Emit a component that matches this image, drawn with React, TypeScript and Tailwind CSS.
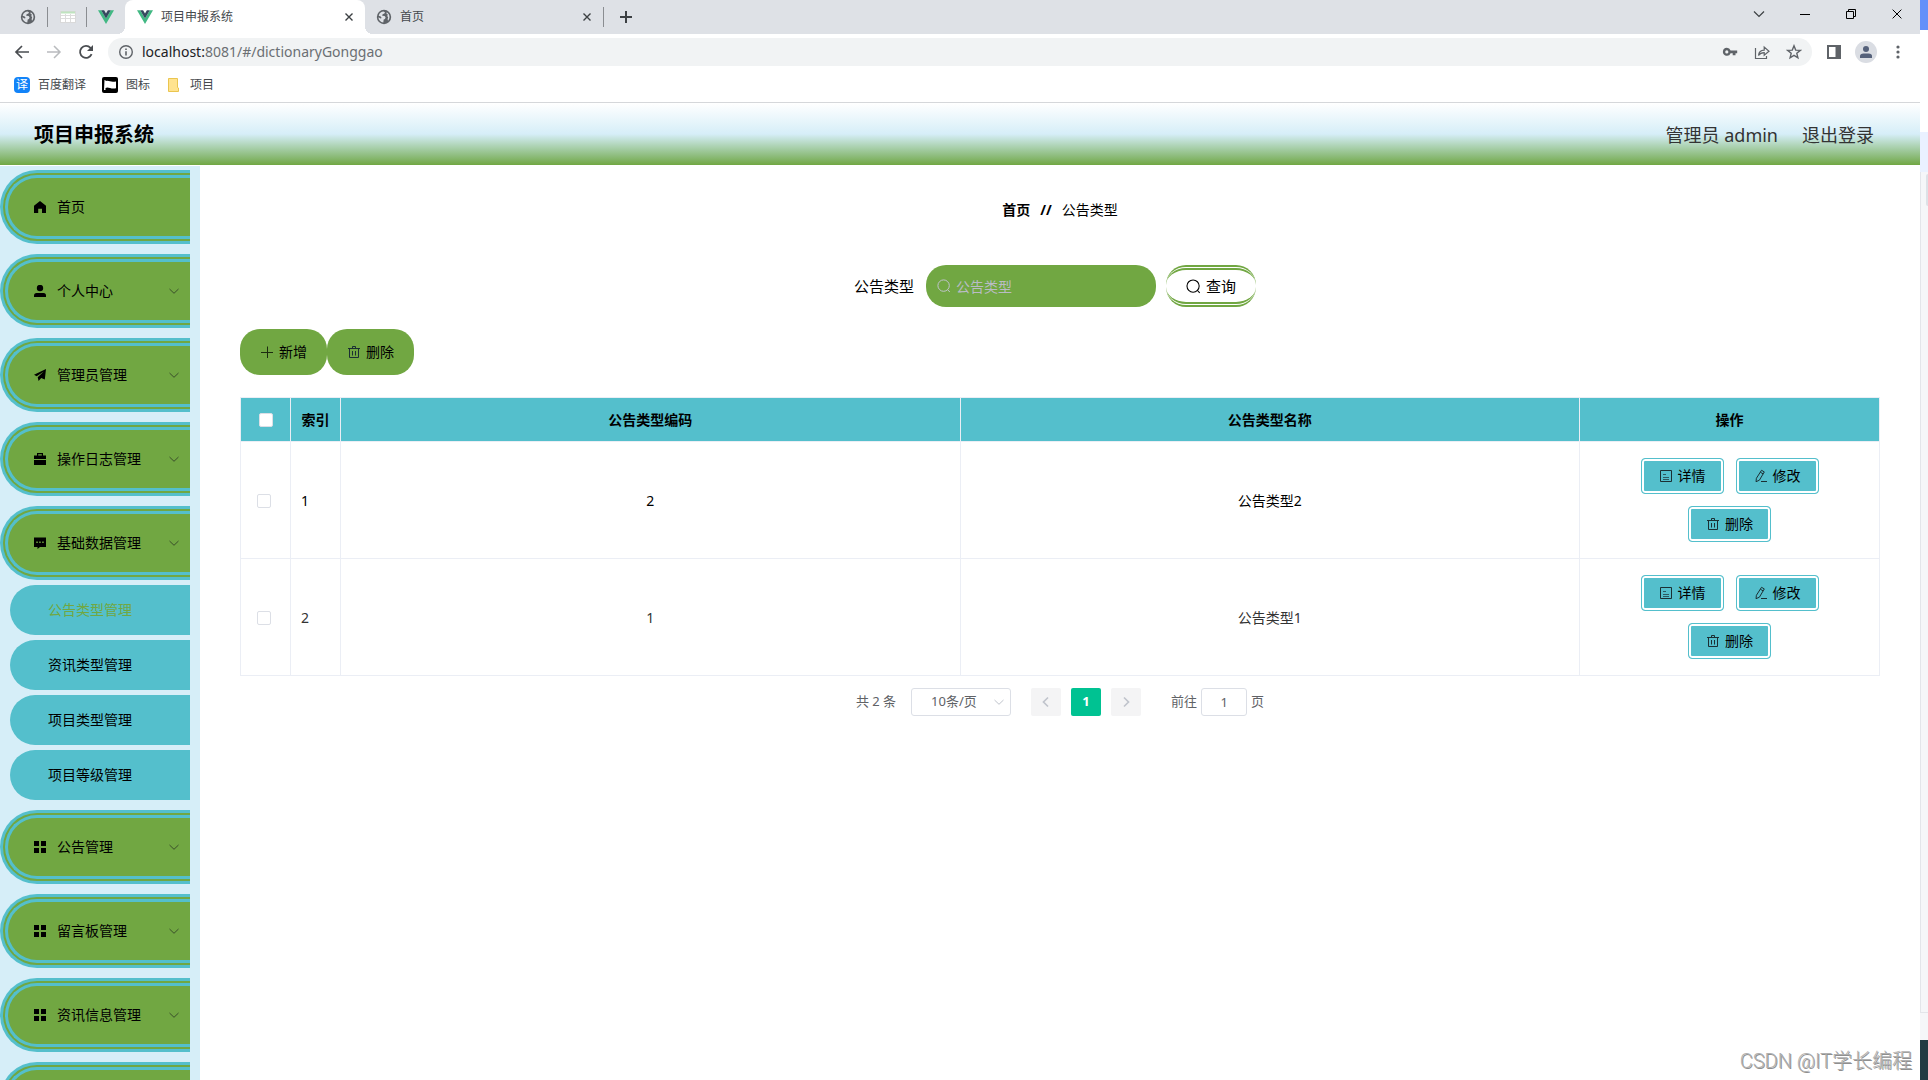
import type { ReactNode } from "react";

type IconProps = { className?: string };

const Svg = ({
  box = 16,
  className = "size-4",
  fill = false,
  w = 1,
  children,
}: {
  box?: number;
  className?: string;
  fill?: boolean;
  w?: number;
  children: ReactNode;
}) => (
  <svg
    viewBox={`0 0 ${box} ${box}`}
    className={`shrink-0 ${className}`}
    fill={fill ? "currentColor" : "none"}
    stroke={fill ? "none" : "currentColor"}
    strokeWidth={w}
    aria-hidden="true"
  >
    {children}
  </svg>
);

/* ---------- browser icons ---------- */

const Globe = () => (
  <Svg className="size-4 text-[#5f6368]" fill>
    <circle cx="8" cy="8" r="7.2" />
    <path
      fill="#dee1e6"
      d="M3.4 4.8C4.3 3.4 5.6 2.6 7.4 2.4L9 3.2 8.4 4.400 6.600 5.300 6.200 6.800 8.600 7 9.600 8.300 9 10 7.700 10.500 7.300 13.500C4.500 13.200 2.500 11 2.400 8.200L4.600 9.400 5.600 9 4.800 7.600 2.700 6.800ZM10.800 3.200C12.500 4.200 13.500 5.900 13.500 8 13.500 9.500 12.900 10.800 12 11.800L11.600 10 12.200 8.600 11.300 7 11.800 5.600 10.400 4.600Z"
    />
  </Svg>
);

const VueLogo = () => (
  <Svg className="size-4" fill>
    <path fill="#41b883" d="M0 1.200H3.200L8 9.500 12.800 1.200H16L8 15Z" />
    <path fill="#35495e" d="M3.200 1.200H6.100L8 4.500 9.900 1.200H12.800L8 9.500Z" />
  </Svg>
);

const SheetIcon = () => (
  <Svg className="size-4">
    <rect x="0.5" y="2.5" width="15" height="11" fill="#fff" stroke="#d9d9d9" />
    <path stroke="#bfe3bf" d="M1 3.500H15" strokeWidth="2" />
    <path stroke="#dcdcdc" d="M1 6.500H15M1 9.500H15M5.500 5V13M10.500 5V13" />
  </Svg>
);

const Cross = ({ className = "size-2", w = 1.4 }: { className?: string; w?: number }) => (
  <Svg box={8} className={className} w={w}>
    <path d="M0.500 0.500 7.500 7.500M7.500 0.500 0.500 7.500" />
  </Svg>
);

const BackIcon = () => (
  <Svg w={1.7}>
    <path d="M15 8H2.500M8 2 2 8 8 14" />
  </Svg>
);

const ForwardIcon = () => (
  <Svg w={1.5}>
    <path d="M1 8H13.500M8 2 14 8 8 14" />
  </Svg>
);

const ReloadIcon = () => (
  <Svg w={1.8}>
    <path d="M13.600 10.200A6 6 0 1 1 12.500 3.900L14 5.400" />
    <path d="M15 1V7H9Z" fill="currentColor" stroke="none" />
  </Svg>
);

const InfoIcon = () => (
  <Svg className="size-4 text-[#5f6368]" w={1.4}>
    <circle cx="8" cy="8" r="6.300" />
    <path d="M8 7.200V11.500M8 4.500V6" strokeWidth="1.600" />
  </Svg>
);

const KeyIcon = () => (
  <Svg fill>
    <path
      fillRule="evenodd"
      d="M4.800 3.800A4 4 0 1 0 8.600 9.300H10.700V11.300H13.500V9.300H15.200V6.400H8.600A4 4 0 0 0 4.800 3.800ZM4.800 6.300A1.600 1.600 0 1 1 4.800 9.500 1.600 1.600 0 0 1 4.800 6.300Z"
    />
  </Svg>
);

const ShareIcon = () => (
  <Svg w={1.2}>
    <path d="M1.500 4V14.500H12.500V12" />
    <path d="M4.500 11.500C4.900 8 7 6.300 10.200 6.200V3L15 7.300 10.200 11.300V8.600C7.800 8.600 5.900 9.400 4.500 11.500Z" />
  </Svg>
);

const StarIcon = () => (
  <Svg w={1.4}>
    <path d="M8 1.800 9.700 6.100 14.300 6.400 10.800 9.300 11.900 13.800 8 11.300 4.100 13.800 5.200 9.300 1.700 6.400 6.300 6.100Z" />
  </Svg>
);

const PanelIcon = () => (
  <Svg w={2}>
    <rect x="2" y="2" width="12" height="12" />
    <path d="M11.500 2V14" strokeWidth="4" />
  </Svg>
);

/* ---------- page icons ---------- */

const HomeIcon = () => (
  <Svg box={12} className="size-3" fill>
    <path d="M6 0 12 4.800V12H8V7.800H4.200V12H0V4.800Z" />
  </Svg>
);
const UserIcon = () => (
  <Svg box={12} className="size-3" fill>
    <circle cx="6" cy="3" r="3.200" />
    <path d="M0 12V10.500Q0 8 2.500 8H9.500Q12 8 12 10.500V12Z" />
  </Svg>
);
const PlaneIcon = () => (
  <Svg box={12} className="size-3" fill>
    <path d="M12 0 10.800 10.500 7.200 8.900 4.600 12 3.700 8.200 9.800 2.400 2.700 7.300 0 5.700Z" />
  </Svg>
);
const CaseIcon = () => (
  <Svg box={12} className="size-3" fill>
    <path d="M3 2.500V0H9V2.500H12V6H0V2.500ZM4.200 2.500H7.800V1.200H4.200ZM0 7H12V12H0Z" fillRule="evenodd" />
  </Svg>
);
const ChatIcon = () => (
  <Svg box={12} className="size-3" fill>
    <path
      fillRule="evenodd"
      d="M0 0.500H12V10H6L3.500 12V10H0ZM2.300 4.500V6H3.800V4.500ZM5.200 4.500V6H6.700V4.500ZM8.200 4.500V6H9.700V4.500Z"
    />
  </Svg>
);
const GridIcon = () => (
  <Svg box={12} className="size-3" fill>
    <path d="M0 0H5V5H0ZM7 0H12V5H7ZM0 7H5V12H0ZM7 7H12V12H7Z" />
  </Svg>
);

const ChevronDown = ({ className = "size-3" }: IconProps) => (
  <Svg box={12} className={className} w={1}>
    <path d="M1.500 4 6 8.300 10.500 4" />
  </Svg>
);
const SearchIcon = ({ className = "size-3.5" }: IconProps) => (
  <Svg box={14} className={className} w={1}>
    <circle cx="6.600" cy="6.600" r="5.700" />
    <path d="M10.500 10.500 12.800 13" />
  </Svg>
);
const PlusIcon = () => (
  <Svg box={14} className="size-3.5 text-[#1c2b10]">
    <path d="M1 7.500H13M7.500 1.500V13" />
  </Svg>
);
const TrashIcon = () => (
  <Svg box={14} className="size-3.5 text-[#1b2f33]">
    <path d="M1 3.500H13M2.500 3.500V12.500H11.500V3.500M5.500 3V1.500H8.500V3M5.500 6V10.500M8.500 6V10.500" />
  </Svg>
);
const DocIcon = () => (
  <Svg box={14} className="size-3.5 text-[#1b2f33]">
    <path d="M1.500 1.500H12.500V12.500H1.500Z" />
    <path d="M4 5.500H7M4 8.500H10M4 10.500H10" opacity="0.7" />
  </Svg>
);
const EditIcon = () => (
  <Svg box={14} className="size-3.5 text-[#1b2f33]">
    <path d="M7.500 1.300 10.300 2.900 5.400 11.200 2 12.700 2.400 9.300ZM6.300 3.200 9.200 4.900M7 12.500H13" />
  </Svg>
);

/* ---------- data ---------- */

type Group = { label: string; icon?: () => ReactNode; leaf?: boolean; children?: string[] };

const menu: Group[] = [
  { label: "首页", icon: HomeIcon, leaf: true },
  { label: "个人中心", icon: UserIcon },
  { label: "管理员管理", icon: PlaneIcon },
  { label: "操作日志管理", icon: CaseIcon },
  {
    label: "基础数据管理",
    icon: ChatIcon,
    children: ["公告类型管理", "资讯类型管理", "项目类型管理", "项目等级管理"],
  },
  { label: "公告管理", icon: GridIcon },
  { label: "留言板管理", icon: GridIcon },
  { label: "资讯信息管理", icon: GridIcon },
  { label: "", leaf: true },
];

const rows = [
  { index: 1, code: "2", name: "公告类型2", tone: "text-black" },
  { index: 2, code: "1", name: "公告类型1", tone: "text-[#333333]" },
];

/* ---------- browser frame ---------- */

function TabStrip() {
  return (
    <div className="flex h-[34px] items-stretch bg-[#dee1e6] text-xs text-[#45494d]">
      <div className="flex items-center pl-5">
        <Globe />
        <span className="ml-[11px] h-5 w-px bg-[#8a8d91]" />
        <span className="ml-3">
          <SheetIcon />
        </span>
        <span className="ml-[10px] h-5 w-px bg-[#8a8d91]" />
        <span className="ml-[11px]">
          <VueLogo />
        </span>
      </div>
      <div className="relative ml-[11px] flex w-60 items-center rounded-t-lg bg-white pr-2 pl-3 before:absolute before:bottom-0 before:-left-2 before:size-2 before:bg-[radial-gradient(circle_at_0_0,#dee1e6_8px,#ffffff_8px)] after:absolute after:-right-2 after:bottom-0 after:size-2 after:bg-[radial-gradient(circle_at_100%_0,#dee1e6_8px,#ffffff_8px)]">
        <VueLogo />
        <span className="ml-2 flex-1">项目申报系统</span>
        <button aria-label="关闭 项目申报系统" className="p-1 text-[#3c4043]">
          <Cross />
        </button>
      </div>
      <div className="flex w-[238px] items-center pr-2 pl-[11px]">
        <Globe />
        <span className="ml-2 flex-1">首页</span>
        <button aria-label="关闭 首页" className="p-1 text-[#3c4043]">
          <Cross />
        </button>
      </div>
      <span className="h-5 w-px self-center bg-[#8a8d91]" />
      <button aria-label="新标签页" className="ml-4 text-[#3c4043]">
        <Svg box={12} className="size-3" w={2}>
          <path d="M0 6H12M6 0V12" />
        </Svg>
      </button>
      <div className="ml-auto flex items-center pb-1.5 text-black">
        <button aria-label="搜索标签页" className="grid w-[46px] place-items-center text-[#3c4043]">
          <Svg box={12} className="size-3" w={1.2}>
            <path d="M1 3.500 6 8.500 11 3.500" />
          </Svg>
        </button>
        <button aria-label="最小化" className="grid w-[46px] place-items-center">
          <Svg box={10} className="size-2.5">
            <path d="M0 5.500H10" />
          </Svg>
        </button>
        <button aria-label="还原" className="grid w-[46px] place-items-center">
          <Svg box={10} className="size-2.5">
            <path d="M0.500 2.500H7.500V9.500H0.500ZM2.500 2V0.500H9.500V7.500H8" />
          </Svg>
        </button>
        <button aria-label="关闭" className="grid w-[46px] place-items-center">
          <Cross className="size-2.5" w={0.8} />
        </button>
      </div>
    </div>
  );
}

function Toolbar() {
  return (
    <div className="flex h-9 items-center bg-white px-[14px] text-[#5f6368]">
      <div className="flex gap-4">
        <button aria-label="后退" className="text-[#4a4d51]">
          <BackIcon />
        </button>
        <button aria-label="前进" className="text-[#b9bbbe]">
          <ForwardIcon />
        </button>
        <button aria-label="重新加载" className="text-[#4a4d51]">
          <ReloadIcon />
        </button>
      </div>
      <div className="ml-[14px] flex h-7 flex-1 items-center rounded-full bg-[#f1f3f4] px-[10px]">
        <InfoIcon />
        <span className="ml-2 flex-1 text-sm text-[#6b6f73]">
          <span className="text-[#202124]">localhost:</span>8081/#/dictionaryGonggao
        </span>
        <div className="flex gap-4">
          <button aria-label="密码">
            <KeyIcon />
          </button>
          <button aria-label="分享">
            <ShareIcon />
          </button>
          <button aria-label="收藏">
            <StarIcon />
          </button>
        </div>
      </div>
      <button aria-label="侧边栏" className="ml-[14px]">
        <PanelIcon />
      </button>
      <button
        aria-label="用户"
        className="ml-[13px] grid size-[22px] place-items-center rounded-full bg-[#dadde3] text-[#55617a]"
      >
        <Svg box={12} className="size-3" fill>
          <circle cx="6" cy="3" r="3" />
          <path d="M0 12V10Q0 7.500 3.500 7.500H8.500Q12 7.500 12 10V12Z" />
        </Svg>
      </button>
      <button aria-label="菜单" className="ml-[13px]">
        <Svg fill>
          <circle cx="8" cy="3" r="1.600" />
          <circle cx="8" cy="8" r="1.600" />
          <circle cx="8" cy="13" r="1.600" />
        </Svg>
      </button>
    </div>
  );
}

function Bookmarks() {
  return (
    <nav className="flex h-[33px] items-center gap-4 border-b border-[#d5d7da] bg-white pb-0.5 pl-[14px] text-xs text-[#45494d]">
      <a href="#fanyi" className="flex items-center gap-2">
        <span className="grid size-4 place-items-center rounded-sm bg-[#1283f8] text-xs leading-4 text-white">
          译
        </span>
        百度翻译
      </a>
      <a href="#tubiao" className="flex items-center gap-2">
        <Svg className="size-4" fill>
          <rect width="16" height="16" rx="2" fill="#000" />
          <path fill="#fff" d="M2.500 3H3.500V4Q6 3.500 8 4.300T14 4.500V11.200Q11 12 8 11T3.500 11V13H2Z" />
        </Svg>
        图标
      </a>
      <a href="#xiangmu" className="flex items-center gap-2">
        <Svg className="size-4">
          <path d="M2.500 1.500H11.500V10.500L12.500 11V14.500H2.500Z" fill="#ffe38f" stroke="#eac54f" />
        </Svg>
        项目
      </a>
    </nav>
  );
}

/* ---------- application ---------- */

function Sidebar() {
  return (
    <aside className="w-[200px] shrink-0 overflow-hidden bg-[#d6eef8] pt-1 pr-2.5 text-sm text-black">
      <ul className="flex flex-col gap-2.5">
        {menu.map((g) => (
          <li key={g.label}>
            <button className="flex h-[74px] w-full items-center rounded-l-full border-8 border-r-0 border-double border-[#54bfcc] bg-[#71a742] pr-2.5 pl-[26px] text-left">
              {g.icon && <g.icon />}
              <span className="ml-[11px] flex-1">{g.label}</span>
              {!g.leaf && <ChevronDown className="size-3 text-[#3a4f2a]" />}
            </button>
            {g.children && (
              <ul className="mt-[5px] flex flex-col gap-[5px] pl-2.5">
                {g.children.map((c, i) => (
                  <li key={c}>
                    <a
                      href={`#/${c}`}
                      className={`flex h-[50px] items-center rounded-l-full bg-[#54bfcc] pl-[38px] ${
                        i === 0 ? "text-[#71a742]" : "text-black"
                      }`}
                    >
                      {c}
                    </a>
                  </li>
                ))}
              </ul>
            )}
          </li>
        ))}
      </ul>
    </aside>
  );
}

function ActionButton({ icon, children }: { icon: ReactNode; children: ReactNode }) {
  return (
    <button className="flex h-9 items-center gap-[5px] rounded-sm border border-[#54bfcc] bg-[#54bfcc] px-[17px] text-sm text-black shadow-[inset_0_0_0_2px_#ffffff]">
      {icon}
      {children}
    </button>
  );
}

const checkbox = "block size-3.5 appearance-none rounded-xs border border-[#dcdfe6] bg-white";

function DataTable() {
  return (
    <table className="mt-[22px] w-full table-fixed border-collapse text-sm [&_td]:border [&_td]:border-[#ebeef5] [&_th]:border [&_th]:border-[#ebeef5]">
      <colgroup>
        <col className="w-[50px]" />
        <col className="w-[50px]" />
        <col />
        <col />
        <col className="w-[300px]" />
      </colgroup>
      <thead>
        <tr className="h-11 bg-[#54bfcc] text-black">
          <th className="pl-[18px]">
            <input type="checkbox" aria-label="全选" className={checkbox} />
          </th>
          <th>索引</th>
          <th>公告类型编码</th>
          <th>公告类型名称</th>
          <th>操作</th>
        </tr>
      </thead>
      <tbody>
        {rows.map((r) => (
          <tr key={r.index} className={`text-center ${r.tone}`}>
            <td className="pt-0.5 pl-4">
              <input type="checkbox" aria-label={`选择第${r.index}行`} className={checkbox} />
            </td>
            <td className="pt-0.5 pl-2.5 text-left">{r.index}</td>
            <td className="pt-0.5">{r.code}</td>
            <td className="pt-0.5">{r.name}</td>
            <td className="px-14 py-4">
              <div className="flex flex-wrap justify-center gap-3">
                <ActionButton icon={<DocIcon />}>详情</ActionButton>
                <ActionButton icon={<EditIcon />}>修改</ActionButton>
                <ActionButton icon={<TrashIcon />}>删除</ActionButton>
              </div>
            </td>
          </tr>
        ))}
      </tbody>
    </table>
  );
}

function Pagination() {
  return (
    <div className="mt-3 flex items-center justify-center text-[13px] text-[#606266]">
      <span>共 2 条</span>
      <span className="relative ml-[15px]">
        <select
          aria-label="每页条数"
          className="block h-7 w-[100px] appearance-none rounded-[3px] border border-[#dcdfe6] bg-white pl-[19px] text-[13px]"
        >
          <option>10条/页</option>
        </select>
        <ChevronDown className="pointer-events-none absolute top-2 right-1.5 size-3 text-[#c0c4cc]" />
      </span>
      <button
        aria-label="上一页"
        className="ml-5 grid h-7 w-[30px] place-items-center rounded-xs bg-[#f4f4f5] text-[#c0c4cc]"
      >
        <Svg box={12} className="size-3" w={1.7}>
          <path d="M8 1.500 3.500 6 8 10.500" />
        </Svg>
      </button>
      <button className="ml-2.5 h-7 w-[30px] rounded-xs bg-[#00c292] font-bold text-white">1</button>
      <button
        aria-label="下一页"
        className="ml-2.5 grid h-7 w-[30px] place-items-center rounded-xs bg-[#f4f4f5] text-[#c0c4cc]"
      >
        <Svg box={12} className="size-3" w={1.7}>
          <path d="M4 1.500 8.500 6 4 10.500" />
        </Svg>
      </button>
      <label className="ml-[30px] flex items-center gap-1">
        前往
        <input
          defaultValue="1"
          className="h-7 w-[46px] rounded-[3px] border border-[#dcdfe6] text-center"
        />
        页
      </label>
    </div>
  );
}

function Content() {
  return (
    <main className="min-w-0 flex-1 px-10 pt-[34px]">
      <nav className="flex h-5 items-center justify-center gap-2.5 text-sm text-black">
        <a href="#/" className="font-bold">
          首页
        </a>
        <span className="font-bold">//</span>
        <span>公告类型</span>
      </nav>

      <form
        className="mt-[45px] flex items-center justify-center pr-2.5 text-[15px] text-black"
        onSubmit={(e) => e.preventDefault()}
      >
        <label htmlFor="type">公告类型</label>
        <span className="relative ml-3">
          <SearchIcon className="pointer-events-none absolute top-3.5 left-[11px] size-3.5 text-[#c0c4cc]" />
          <input
            id="type"
            placeholder="公告类型"
            className="block h-[42px] w-[230px] rounded-[20px] bg-[#71a742] pl-[30px] text-sm placeholder:text-[#b9bcc4]"
          />
        </span>
        <button className="ml-2.5 flex h-[42px] items-center gap-[5px] rounded-[20px] border-y-[5px] border-double border-[#71a742] bg-white px-5">
          <SearchIcon className="size-[15px]" />
          查询
        </button>
      </form>

      <div className="mt-[22px] flex text-sm text-black">
        <button className="flex h-[46px] items-center gap-[5px] rounded-[20px] bg-[#71a742] px-5">
          <PlusIcon />
          新增
        </button>
        <button className="flex h-[46px] items-center gap-[5px] rounded-[20px] bg-[#71a742] px-5">
          <TrashIcon />
          删除
        </button>
      </div>

      <DataTable />
      <Pagination />
    </main>
  );
}

export default function App() {
  return (
    <div className="relative flex h-screen overflow-hidden bg-white font-['Noto_Sans','Noto_Sans_CJK_SC',sans-serif]">
      <div className="flex min-w-0 flex-1 flex-col">
        <TabStrip />
        <Toolbar />
        <Bookmarks />
        <header className="flex h-[62px] shrink-0 items-center bg-linear-to-b from-white via-[#d6eef8] to-[#71a742] pt-0.5 pr-[46px] pl-[34px]">
          <h1 className="text-xl font-bold text-black">项目申报系统</h1>
          <div className="ml-auto flex gap-6 text-lg text-[#333333]">
            <span>管理员 admin</span>
            <a href="#/login">退出登录</a>
          </div>
        </header>
        <div className="mt-px flex min-h-0 flex-1">
          <Sidebar />
          <Content />
        </div>
      </div>

      <div className="flex w-2 shrink-0 flex-col" aria-hidden="true">
        <div className="h-[30px] bg-[#6490fa]" />
        <div className="h-[102px] bg-white" />
        <div className="h-10 bg-[#eaf1ff]" />
        <div className="flex-1 border-l border-[#e3e5ea] bg-[#f5f6f9] pt-0.5">
          <div className="ml-[5px] h-8 rounded-l-xs bg-[#dde1e7]" />
        </div>
        <div className="h-7 border-t border-[#e3e5ea] bg-[#f5f6f9]" />
        <div className="h-10 bg-[#243b43]" />
      </div>

      <div className="absolute right-4 bottom-1 font-['Roboto','Noto_Sans_CJK_SC',sans-serif] text-xl leading-[30px] font-light text-[#b0b0b0] [text-shadow:1px_1px_0_#8f8f8f]">
        CSDN @IT学长编程
      </div>
    </div>
  );
}
